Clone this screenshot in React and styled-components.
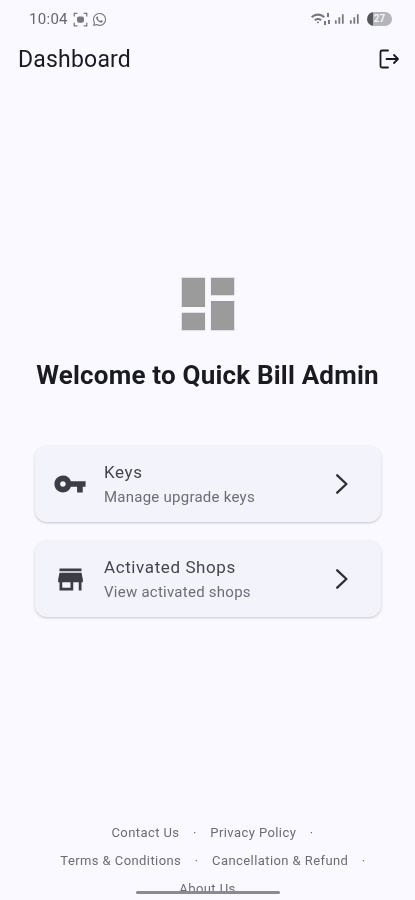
import React from "react";
import styled, { createGlobalStyle } from "styled-components";
import { MdVpnKey, MdStore, MdDashboard, MdSignalCellularAlt } from "react-icons/md";
import { FaWhatsapp } from "react-icons/fa";

const GlobalStyle = createGlobalStyle`
  html, body {
    margin: 0;
    padding: 0;
    background: #f9f9ff;
  }
  * {
    box-sizing: border-box;
  }
`;

const Screen = styled.div`
  position: relative;
  width: 415px;
  height: 900px;
  overflow: hidden;
  display: flex;
  flex-direction: column;
  background: #f9f9ff;
  font-family: Roboto, "Liberation Sans", sans-serif;
  color: #1a1b20;
  filter: blur(0.35px);
`;

const StatusBar = styled.div`
  height: 38px;
  padding: 0 23px 0 29px;
  display: flex;
  align-items: center;
  justify-content: space-between;
  color: #77787c;
`;

const StatusGroup = styled.div`
  display: flex;
  align-items: center;
  gap: ${(p) => p.$gap || 4}px;
`;

const Clock = styled.span`
  font-size: 15px;
  letter-spacing: 0.3px;
  margin-right: 1px;
  color: #66676b;
`;

const Battery = styled.span`
  width: 25px;
  height: 14px;
  border-radius: 7px;
  background: linear-gradient(90deg, #55565a 0 6px, #b4b5b9 6px);
  color: #f4f4f8;
  font-size: 10px;
  font-weight: 700;
  line-height: 14px;
  text-align: center;
  margin-left: 5px;
`;

const AppBar = styled.header`
  height: 42px;
  padding: 0 14px 0 18px;
  display: flex;
  align-items: center;
  justify-content: space-between;
`;

const Title = styled.h1`
  margin: 0;
  font-size: 23px;
  font-weight: 400;
  letter-spacing: 0.2px;
`;

const IconButton = styled.button`
  width: 24px;
  height: 24px;
  padding: 0;
  border: 0;
  background: none;
  color: #1a1b20;
  display: flex;
`;

const Hero = styled.section`
  margin-top: 189px;
  display: flex;
  flex-direction: column;
  align-items: center;
  color: #9b9b9b;
`;

const Welcome = styled.h2`
  margin: 0;
  margin-top: 20px;
  font-size: 26px;
  font-weight: 700;
  line-height: 32px;
  color: #1a1b20;
  letter-spacing: 0.2px;
`;

const Cards = styled.div`
  margin-top: 55px;
  padding: 0 34px 0 35px;
  display: flex;
  flex-direction: column;
  gap: 19px;
`;

const Card = styled.a`
  height: 76px;
  padding: 0 27px 0 18px;
  display: flex;
  align-items: center;
  border-radius: 12px;
  background: #f3f3fb;
  box-shadow: 0 1px 3px rgba(0, 0, 0, 0.18), 0 1px 1px rgba(0, 0, 0, 0.04);
`;

const CardIcon = styled.span`
  width: 34px;
  height: 34px;
  margin-right: 17px;
  display: flex;
  align-items: center;
  justify-content: center;
  color: #3c3e44;
  flex: none;
`;

const CardText = styled.div`
  flex: 1;
  display: flex;
  flex-direction: column;
  gap: 4px;
  padding-bottom: 1px;
`;

const CardTitle = styled.span`
  font-size: 17px;
  line-height: 22px;
  letter-spacing: 0.6px;
  color: #45464c;
`;

const CardSub = styled.span`
  font-size: 15px;
  line-height: 20px;
  letter-spacing: 0.25px;
  color: #6d6e74;
`;

const Footer = styled.footer`
  margin-top: auto;
  padding-bottom: 1px;
  display: flex;
  flex-direction: column;
  align-items: center;
  gap: 8px;
  font-size: 13px;
  line-height: 20px;
  letter-spacing: 0.42px;
  color: #6c6d72;
`;

const FooterRow = styled.div`
  display: flex;
  gap: 13.5px;
  padding-left: ${(p) => p.$shift || 0}px;
`;

const NavHandle = styled.div`
  position: absolute;
  left: 136px;
  bottom: 6px;
  width: 144px;
  height: 3px;
  border-radius: 2px;
  background: #8b8b8f;
`;

const Glyph = ({ children, size = 24, ...rest }) => (
  <svg width={size} height={size} viewBox="0 0 24 24" fill="none" stroke="currentColor" {...rest}>
    {children}
  </svg>
);

const ChevronIcon = () => (
  <Glyph size={26} strokeWidth="2.2" strokeLinecap="round" strokeLinejoin="round" color="#303136">
    <path d="M8.5 4 L17 12 L8.5 20" />
  </Glyph>
);

const LogoutIcon = () => (
  <Glyph strokeWidth="1.8" strokeLinecap="round" strokeLinejoin="round">
    <path d="M11 3.5 H5 a1.5 1.5 0 0 0 -1.5 1.5 V19 a1.5 1.5 0 0 0 1.5 1.5 H11" />
    <path d="M9.5 12 H21 M17 8 L21 12 L17 16" />
  </Glyph>
);

const FaceScanIcon = () => (
  <Glyph size={15} strokeWidth="2">
    <path d="M2 7 V2 H7 M17 2 H22 V7 M22 17 V22 H17 M7 22 H2 V17" />
    <rect x="7.5" y="8" width="9" height="8" rx="2" fill="currentColor" />
  </Glyph>
);

// wifi with the little up/down dots the phone shows next to it
const WifiIcon = () => (
  <svg width="20" height="14" viewBox="0 0 20 14" fill="currentColor">
    <path d="M0 4.5 C4 0.5 10 0.5 14 4.5 L12.6 6 C9.4 3 4.6 3 1.4 6 Z" />
    <path d="M3.2 7.6 C5.4 5.6 8.6 5.6 10.8 7.6 L9.4 9 C8 7.8 6 7.8 4.6 9 Z" />
    <path d="M5.8 10.2 L7 9.2 L8.2 10.2 L7 11.6 Z" />
    <rect x="16" y="1" width="2" height="4" />
    <rect x="13" y="9" width="2" height="4" />
    <rect x="17" y="8" width="2" height="4" />
  </svg>
);

const items = [
  { title: "Keys", sub: "Manage upgrade keys", icon: <MdVpnKey size={36} /> },
  { title: "Activated Shops", sub: "View activated shops", icon: <MdStore size={33} /> },
];

export default function App() {
  return (
    <Screen>
      <GlobalStyle />
      <StatusBar>
        <StatusGroup>
          <Clock>10:04</Clock>
          <FaceScanIcon />
          <FaWhatsapp size={15} />
        </StatusGroup>
        <StatusGroup $gap={1}>
          <WifiIcon />
          <MdSignalCellularAlt size={14} />
          <MdSignalCellularAlt size={14} />
          <Battery>27</Battery>
        </StatusGroup>
      </StatusBar>
      <AppBar>
        <Title>Dashboard</Title>
        <IconButton aria-label="Log out">
          <LogoutIcon />
        </IconButton>
      </AppBar>
      <Hero>
        <MdDashboard size={70} />
        <Welcome>Welcome to Quick Bill Admin</Welcome>
      </Hero>
      <Cards>
        {items.map((item) => (
          <Card key={item.title}>
            <CardIcon>{item.icon}</CardIcon>
            <CardText>
              <CardTitle>{item.title}</CardTitle>
              <CardSub>{item.sub}</CardSub>
            </CardText>
            <ChevronIcon />
          </Card>
        ))}
      </Cards>
      <Footer>
        <FooterRow $shift={10}>
          <span>Contact Us</span>
          <span>·</span>
          <span>Privacy Policy</span>
          <span>·</span>
        </FooterRow>
        <FooterRow $shift={11}>
          <span>Terms &amp; Conditions</span>
          <span>·</span>
          <span>Cancellation &amp; Refund</span>
          <span>·</span>
        </FooterRow>
        <FooterRow>
          <span>About Us</span>
        </FooterRow>
      </Footer>
      <NavHandle />
    </Screen>
  );
}
